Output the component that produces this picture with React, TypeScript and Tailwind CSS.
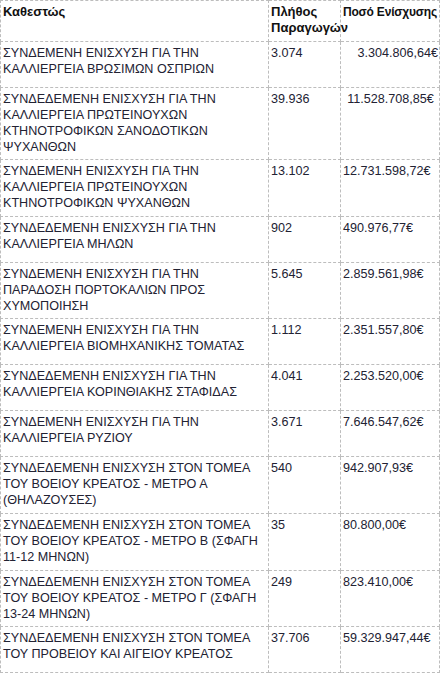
const rows: { name: string[]; count: string; amount: string; align?: 'right' | 'center' }[] = [
  { name: ['ΣΥΝΔΕΜΕΝΗ ΕΝΙΣΧΥΣΗ ΓΙΑ ΤΗΝ', 'ΚΑΛΛΙΕΡΓΕΙΑ ΒΡΩΣΙΜΩΝ ΟΣΠΡΙΩΝ'], count: '3.074', amount: '3.304.806,64€', align: 'right' },
  { name: ['ΣΥΝΔΕΔΕΜΕΝΗ ΕΝΙΣΧΥΣΗ ΓΙΑ ΤΗΝ', 'ΚΑΛΛΙΕΡΓΕΙΑ ΠΡΩΤΕΙΝΟΥΧΩΝ', 'ΚΤΗΝΟΤΡΟΦΙΚΩΝ ΣΑΝΟΔΟΤΙΚΩΝ', 'ΨΥΧΑΝΘΩΝ'], count: '39.936', amount: '11.528.708,85€', align: 'center' },
  { name: ['ΣΥΝΔΕΜΕΝΗ ΕΝΙΣΧΥΣΗ ΓΙΑ ΤΗΝ', 'ΚΑΛΛΙΕΡΓΕΙΑ ΠΡΩΤΕΙΝΟΥΧΩΝ', 'ΚΤΗΝΟΤΡΟΦΙΚΩΝ ΨΥΧΑΝΘΩΝ'], count: '13.102', amount: '12.731.598,72€' },
  { name: ['ΣΥΝΔΕΔΕΜΕΝΗ ΕΝΙΣΧΥΣΗ ΓΙΑ ΤΗΝ', 'ΚΑΛΛΙΕΡΓΕΙΑ ΜΗΛΩΝ'], count: '902', amount: '490.976,77€' },
  { name: ['ΣΥΝΔΕΜΕΝΗ ΕΝΙΣΧΥΣΗ ΓΙΑ ΤΗΝ', 'ΠΑΡΑΔΟΣΗ ΠΟΡΤΟΚΑΛΙΩΝ ΠΡΟΣ', 'ΧΥΜΟΠΟΙΗΣΗ'], count: '5.645', amount: '2.859.561,98€' },
  { name: ['ΣΥΝΔΕΜΕΝΗ ΕΝΙΣΧΥΣΗ ΓΙΑ ΤΗΝ', 'ΚΑΛΛΙΕΡΓΕΙΑ ΒΙΟΜΗΧΑΝΙΚΗΣ ΤΟΜΑΤΑΣ'], count: '1.112', amount: '2.351.557,80€' },
  { name: ['ΣΥΝΔΕΔΕΜΕΝΗ ΕΝΙΣΧΥΣΗ ΓΙΑ ΤΗΝ', 'ΚΑΛΛΙΕΡΓΕΙΑ ΚΟΡΙΝΘΙΑΚΗΣ ΣΤΑΦΙΔΑΣ'], count: '4.041', amount: '2.253.520,00€' },
  { name: ['ΣΥΝΔΕΜΕΝΗ ΕΝΙΣΧΥΣΗ ΓΙΑ ΤΗΝ', 'ΚΑΛΛΙΕΡΓΕΙΑ ΡΥΖΙΟΥ'], count: '3.671', amount: '7.646.547,62€' },
  { name: ['ΣΥΝΔΕΔΕΜΕΝΗ ΕΝΙΣΧΥΣΗ ΣΤΟΝ ΤΟΜΕΑ', 'ΤΟΥ ΒΟΕΙΟΥ ΚΡΕΑΤΟΣ - ΜΕΤΡΟ Α', '(ΘΗΛΑΖΟΥΣΕΣ)'], count: '540', amount: '942.907,93€' },
  { name: ['ΣΥΝΔΕΔΕΜΕΝΗ ΕΝΙΣΧΥΣΗ ΣΤΟΝ ΤΟΜΕΑ', 'ΤΟΥ ΒΟΕΙΟΥ ΚΡΕΑΤΟΣ - ΜΕΤΡΟ Β (ΣΦΑΓΗ', '11-12 ΜΗΝΩΝ)'], count: '35', amount: '80.800,00€' },
  { name: ['ΣΥΝΔΕΔΕΜΕΝΗ ΕΝΙΣΧΥΣΗ ΣΤΟΝ ΤΟΜΕΑ', 'ΤΟΥ ΒΟΕΙΟΥ ΚΡΕΑΤΟΣ - ΜΕΤΡΟ Γ (ΣΦΑΓΗ', '13-24 ΜΗΝΩΝ)'], count: '249', amount: '823.410,00€' },
  { name: ['ΣΥΝΔΕΔΕΜΕΝΗ ΕΝΙΣΧΥΣΗ ΣΤΟΝ ΤΟΜΕΑ', 'ΤΟΥ ΠΡΟΒΕΙΟΥ ΚΑΙ ΑΙΓΕΙΟΥ ΚΡΕΑΤΟΣ'], count: '37.706', amount: '59.329.947,44€' },
]

const cell = 'border border-dashed border-[#bdbdbd] align-top pl-[2px] pr-[1px] pt-[3px] pb-[4.6px]'

export default function App() {
  return (
    <div className="bg-white min-h-screen font-['Liberation_Sans',sans-serif] text-[12.6px] leading-[16px] text-[#222233]">
      <table className="w-[439px] table-fixed border-collapse">
        <colgroup>
          <col className="w-[268px]" />
          <col className="w-[72px]" />
          <col className="w-[99px]" />
        </colgroup>
        <thead>
          <tr className="h-[40px]">
            <th className={cell + ' text-left font-bold text-[13px] text-[#111]'}>Καθεστώς</th>
            <th className={cell + ' text-left font-bold text-[13px] text-[#111] whitespace-nowrap'}>
              Πλήθος
              <br />
              Παραγωγών
            </th>
            <th className={cell + ' text-left font-bold text-[#111] whitespace-nowrap text-[12px] tracking-[-0.2px]'}>
              Ποσό Ενίσχυσης
            </th>
          </tr>
        </thead>
        <tbody>
          {rows.map((r, i) => (
            <tr key={i} className="h-[46px]">
              <td className={cell + ' whitespace-nowrap'}>
                {r.name.map((line, j) => (
                  <div key={j}>{line}</div>
                ))}
              </td>
              <td className={cell}>{r.count}</td>
              <td
                className={
                  cell +
                  (r.align === 'right' ? ' text-right' : r.align === 'center' ? ' text-center' : ' text-left')
                }
              >
                {r.amount}
              </td>
            </tr>
          ))}
        </tbody>
      </table>
    </div>
  )
}
